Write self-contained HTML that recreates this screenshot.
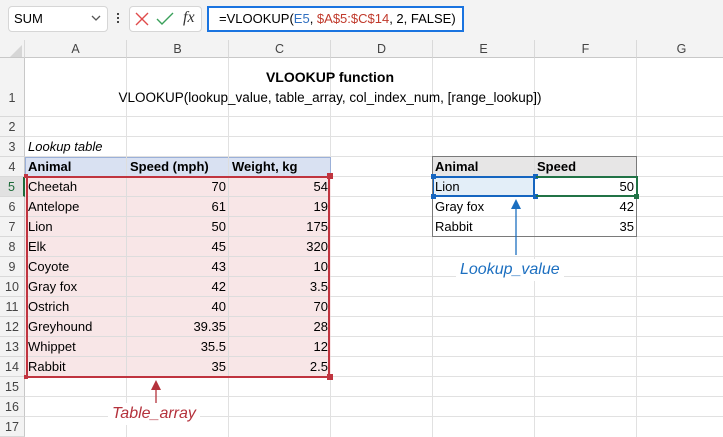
<!DOCTYPE html>
<html><head><meta charset="utf-8"><style>
*{margin:0;padding:0;box-sizing:border-box}
body{width:723px;height:437px;overflow:hidden;background:#fff;font-family:"Liberation Sans",Arial,sans-serif;font-size:13px;color:#000;position:relative}
.a{position:absolute}
.top{left:0;top:0;width:723px;height:40px;background:#f3f3f3}
.box{background:#fff;border:1px solid #d6d6d6;border-radius:4px}
.vl{position:absolute;width:1px;background:#e1e1e1}
.hl{position:absolute;height:1px;background:#e1e1e1}
.ch{position:absolute;top:40px;height:18px;background:#f3f3f3;color:#444;text-align:center;line-height:18px;font-size:12.5px;border-right:1px solid #d9d9d9;border-bottom:1px solid #c8c8c8}
.rh{position:absolute;left:0;width:25px;background:#f3f3f3;color:#444;text-align:center;font-size:12.5px;border-right:1px solid #c8c8c8;border-bottom:1px solid #d9d9d9}
.t{position:absolute;height:20px;line-height:20px;white-space:nowrap}
.r{text-align:right}
.b{font-weight:bold}
</style></head><body>
<div class="a top"></div>
<div class="a box" style="left:8px;top:6px;width:100px;height:26px"></div>
<div class="t" style="left:14px;top:9px">SUM</div>
<svg class="a" style="left:91px;top:14px" width="10" height="8"><path d="M1 2 L5 6 L9 2" stroke="#555" fill="none" stroke-width="1.3"/></svg>
<div class="a" style="left:117px;top:13px;width:2px;height:2px;background:#444;box-shadow:0 4px #444,0 8px #444"></div>
<div class="a box" style="left:129px;top:6px;width:73px;height:26px"></div>
<svg class="a" style="left:135px;top:12px" width="14" height="14"><path d="M1 1 L13 13 M13 1 L1 13" stroke="#e04b4b" stroke-width="1.4"/></svg>
<svg class="a" style="left:156px;top:12px" width="18" height="14"><path d="M1 7 L6 12 L17 1" stroke="#3aa05a" fill="none" stroke-width="1.4"/></svg>
<div class="t" style="left:183px;top:8px;font-family:'Liberation Serif',serif;font-style:italic;font-size:16px;color:#333">fx</div>
<div class="a" style="left:207px;top:6px;width:257px;height:26px;background:#fff;border:2px solid #1a74e0"></div>
<div class="t" style="left:219px;top:9px;font-size:13px">=VLOOKUP(<span style="color:#2f6fc0">E5</span>, <span style="color:#c0392b">$A$5:$C$14</span>, 2, FALSE)</div>

<!-- grid lines -->
<div class="vl" style="left:126px;top:58px;height:379px"></div>
<div class="vl" style="left:228px;top:58px;height:379px"></div>
<div class="vl" style="left:330px;top:58px;height:379px"></div>
<div class="vl" style="left:432px;top:58px;height:379px"></div>
<div class="vl" style="left:534px;top:58px;height:379px"></div>
<div class="vl" style="left:636px;top:58px;height:379px"></div>
<div class="hl" style="left:25px;top:116px;width:698px"></div>
<div class="hl" style="left:25px;top:136px;width:698px"></div>
<div class="hl" style="left:25px;top:156px;width:698px"></div>
<div class="hl" style="left:25px;top:176px;width:698px"></div>
<div class="hl" style="left:25px;top:196px;width:698px"></div>
<div class="hl" style="left:25px;top:216px;width:698px"></div>
<div class="hl" style="left:25px;top:236px;width:698px"></div>
<div class="hl" style="left:25px;top:256px;width:698px"></div>
<div class="hl" style="left:25px;top:276px;width:698px"></div>
<div class="hl" style="left:25px;top:296px;width:698px"></div>
<div class="hl" style="left:25px;top:316px;width:698px"></div>
<div class="hl" style="left:25px;top:336px;width:698px"></div>
<div class="hl" style="left:25px;top:356px;width:698px"></div>
<div class="hl" style="left:25px;top:376px;width:698px"></div>
<div class="hl" style="left:25px;top:396px;width:698px"></div>
<div class="hl" style="left:25px;top:416px;width:698px"></div>

<!-- headers -->
<div class="ch" style="left:0;width:25px"></div>
<svg class="a" style="left:10px;top:45px" width="12" height="12"><path d="M12 0 L12 12 L0 12 Z" fill="#d6d6d6"/></svg>
<div class="ch" style="left:25px;width:102px">A</div>
<div class="ch" style="left:127px;width:102px">B</div>
<div class="ch" style="left:229px;width:102px">C</div>
<div class="ch" style="left:331px;width:102px">D</div>
<div class="ch" style="left:433px;width:102px">E</div>
<div class="ch" style="left:535px;width:102px">F</div>
<div class="ch" style="left:637px;width:90px">G</div>
<div class="rh" style="top:58px;height:59px;line-height:80px">1</div>
<div class="rh" style="top:117px;height:20px;line-height:20px">2</div>
<div class="rh" style="top:137px;height:20px;line-height:20px">3</div>
<div class="rh" style="top:157px;height:20px;line-height:20px">4</div>
<div class="rh" style="top:177px;height:20px;line-height:20px;background:#e1e1e1;color:#1e6b3a;border-right:2px solid #1e6b3a">5</div>
<div class="rh" style="top:197px;height:20px;line-height:20px">6</div>
<div class="rh" style="top:217px;height:20px;line-height:20px">7</div>
<div class="rh" style="top:237px;height:20px;line-height:20px">8</div>
<div class="rh" style="top:257px;height:20px;line-height:20px">9</div>
<div class="rh" style="top:277px;height:20px;line-height:20px">10</div>
<div class="rh" style="top:297px;height:20px;line-height:20px">11</div>
<div class="rh" style="top:317px;height:20px;line-height:20px">12</div>
<div class="rh" style="top:337px;height:20px;line-height:20px">13</div>
<div class="rh" style="top:357px;height:20px;line-height:20px">14</div>
<div class="rh" style="top:377px;height:20px;line-height:20px">15</div>
<div class="rh" style="top:397px;height:20px;line-height:20px">16</div>
<div class="rh" style="top:417px;height:20px;line-height:20px">17</div>

<!-- title -->
<div class="t b" style="left:230px;top:67px;width:200px;text-align:center;font-size:14px">VLOOKUP function</div>
<div class="t" style="left:90px;top:88px;width:480px;text-align:center;font-size:13.5px">VLOOKUP(lookup_value, table_array, col_index_num, [range_lookup])</div>
<div class="t" style="left:28px;top:137px;font-style:italic">Lookup table</div>

<!-- left table -->
<div class="a" style="left:25px;top:157px;width:306px;height:20px;background:#d9e1f2;border:1px solid #9bb0d8"></div>
<div class="a" style="left:25px;top:177px;width:306px;height:200px;background:#f8e6e7"></div>
<div class="vl" style="left:126px;top:157px;height:220px;background:#ddd"></div>
<div class="vl" style="left:228px;top:157px;height:220px;background:#ddd"></div>
<div class="hl" style="left:25px;top:196px;width:306px;background:#ddd"></div>
<div class="hl" style="left:25px;top:216px;width:306px;background:#ddd"></div>
<div class="hl" style="left:25px;top:236px;width:306px;background:#ddd"></div>
<div class="hl" style="left:25px;top:256px;width:306px;background:#ddd"></div>
<div class="hl" style="left:25px;top:276px;width:306px;background:#ddd"></div>
<div class="hl" style="left:25px;top:296px;width:306px;background:#ddd"></div>
<div class="hl" style="left:25px;top:316px;width:306px;background:#ddd"></div>
<div class="hl" style="left:25px;top:336px;width:306px;background:#ddd"></div>
<div class="hl" style="left:25px;top:356px;width:306px;background:#ddd"></div>
<div class="a" style="left:26px;top:176px;width:304px;height:202px;border:2px solid #c0343f"></div>
<div class="a" style="left:327px;top:173px;width:6px;height:6px;background:#c0343f"></div>
<div class="a" style="left:327px;top:374px;width:6px;height:6px;background:#c0343f"></div>
<div class="a" style="left:24px;top:174px;width:4px;height:4px;background:#c0343f"></div>
<div class="a" style="left:24px;top:375px;width:4px;height:4px;background:#c0343f"></div>

<div class="t b" style="left:28px;top:157px">Animal</div>
<div class="t b" style="left:130px;top:157px">Speed (mph)</div>
<div class="t b" style="left:232px;top:157px">Weight, kg</div>

<div class="t" style="left:28px;top:177px">Cheetah</div><div class="t r" style="left:127px;top:177px;width:99px">70</div><div class="t r" style="left:229px;top:177px;width:99px">54</div>
<div class="t" style="left:28px;top:197px">Antelope</div><div class="t r" style="left:127px;top:197px;width:99px">61</div><div class="t r" style="left:229px;top:197px;width:99px">19</div>
<div class="t" style="left:28px;top:217px">Lion</div><div class="t r" style="left:127px;top:217px;width:99px">50</div><div class="t r" style="left:229px;top:217px;width:99px">175</div>
<div class="t" style="left:28px;top:237px">Elk</div><div class="t r" style="left:127px;top:237px;width:99px">45</div><div class="t r" style="left:229px;top:237px;width:99px">320</div>
<div class="t" style="left:28px;top:257px">Coyote</div><div class="t r" style="left:127px;top:257px;width:99px">43</div><div class="t r" style="left:229px;top:257px;width:99px">10</div>
<div class="t" style="left:28px;top:277px">Gray fox</div><div class="t r" style="left:127px;top:277px;width:99px">42</div><div class="t r" style="left:229px;top:277px;width:99px">3.5</div>
<div class="t" style="left:28px;top:297px">Ostrich</div><div class="t r" style="left:127px;top:297px;width:99px">40</div><div class="t r" style="left:229px;top:297px;width:99px">70</div>
<div class="t" style="left:28px;top:317px">Greyhound</div><div class="t r" style="left:127px;top:317px;width:99px">39.35</div><div class="t r" style="left:229px;top:317px;width:99px">28</div>
<div class="t" style="left:28px;top:337px">Whippet</div><div class="t r" style="left:127px;top:337px;width:99px">35.5</div><div class="t r" style="left:229px;top:337px;width:99px">12</div>
<div class="t" style="left:28px;top:357px">Rabbit</div><div class="t r" style="left:127px;top:357px;width:99px">35</div><div class="t r" style="left:229px;top:357px;width:99px">2.5</div>

<!-- table_array label -->
<svg class="a" style="left:150px;top:378px" width="12" height="30"><path d="M6 4 L6 30" stroke="#b4323c" stroke-width="1.3"/><path d="M1 12 L6 2 L11 12 Z" fill="#b4323c"/></svg>
<div class="t" style="left:108px;top:403px;background:#fff;padding:0 4px;font-style:italic;font-size:16px;color:#b4323c;height:22px;line-height:22px">Table_array</div>

<!-- right table -->
<div class="a" style="left:432px;top:156px;width:205px;height:81px;border:1px solid #7a7a7a"></div>
<div class="a" style="left:433px;top:157px;width:203px;height:19px;background:#e7e6e6"></div>
<div class="vl" style="left:534px;top:157px;height:79px;background:#ddd"></div>
<div class="a" style="left:433px;top:177px;width:101px;height:19px;background:#e3eef8"></div>
<div class="a" style="left:433px;top:176px;width:102px;height:21px;border:2px solid #1565c0;border-left-width:1px"></div>
<div class="a" style="left:431px;top:174px;width:5px;height:5px;background:#1565c0"></div>
<div class="a" style="left:533px;top:174px;width:5px;height:5px;background:#1565c0"></div>
<div class="a" style="left:431px;top:194px;width:5px;height:5px;background:#1565c0"></div>
<div class="a" style="left:533px;top:194px;width:5px;height:5px;background:#1565c0"></div>
<div class="a" style="left:536px;top:176px;width:102px;height:21px;border:2px solid #217346;border-left:none"></div>
<div class="a" style="left:634px;top:194px;width:5px;height:5px;background:#217346"></div>
<div class="t b" style="left:435px;top:157px">Animal</div>
<div class="t b" style="left:537px;top:157px">Speed</div>
<div class="t" style="left:435px;top:177px">Lion</div><div class="t r" style="left:535px;top:177px;width:99px">50</div>
<div class="t" style="left:435px;top:197px">Gray fox</div><div class="t r" style="left:535px;top:197px;width:99px">42</div>
<div class="t" style="left:435px;top:217px">Rabbit</div><div class="t r" style="left:535px;top:217px;width:99px">35</div>

<svg class="a" style="left:510px;top:197px" width="12" height="60"><path d="M6 4 L6 58" stroke="#1c6fc0" stroke-width="1.3"/><path d="M1 12 L6 2 L11 12 Z" fill="#1c6fc0"/></svg>
<div class="t" style="left:456px;top:259px;background:#fff;padding:0 4px;font-style:italic;font-size:16px;color:#1c6fc0;height:22px;line-height:22px">Lookup_value</div>
</body></html>
